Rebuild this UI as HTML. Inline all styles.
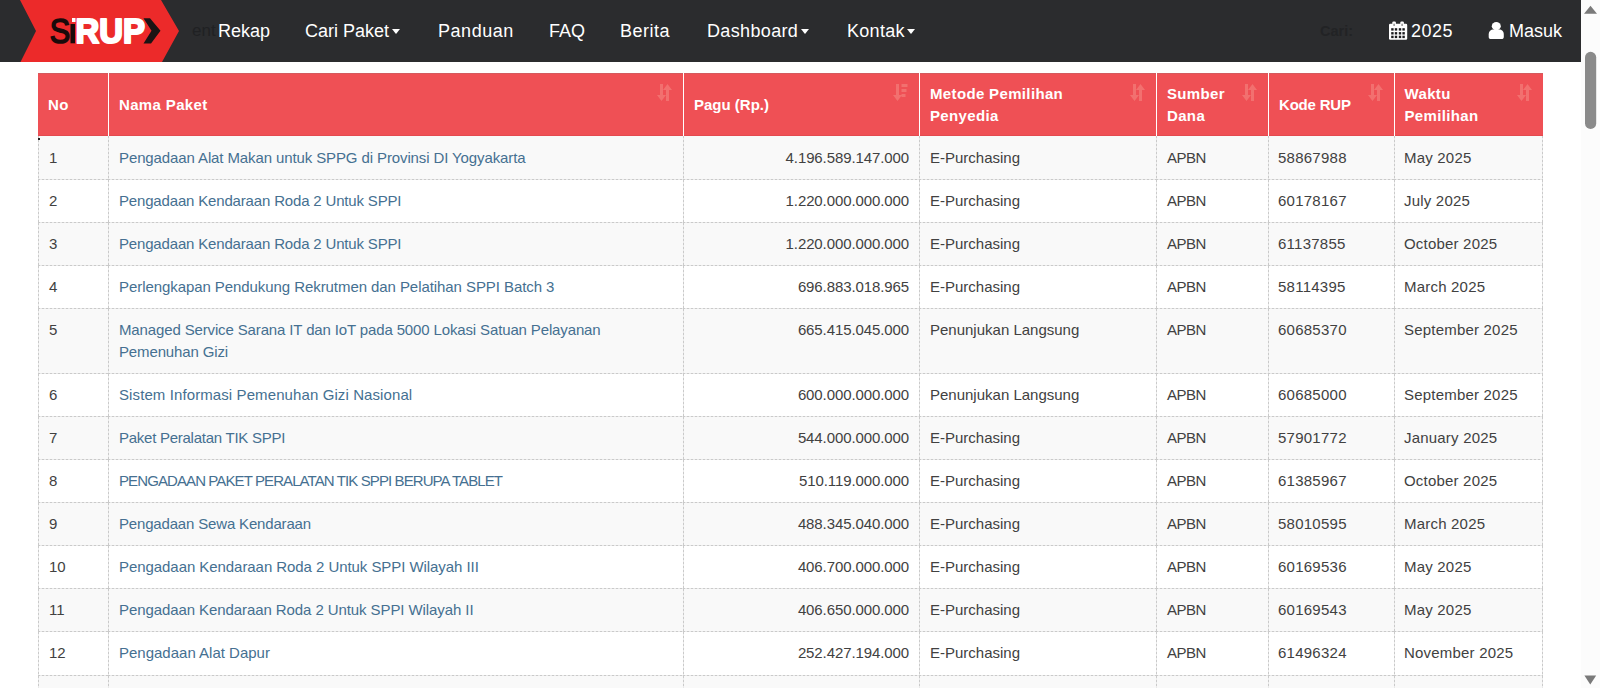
<!DOCTYPE html>
<html>
<head>
<meta charset="utf-8">
<style>
html,body{margin:0;padding:0;}
body{width:1600px;height:688px;overflow:hidden;position:relative;background:#fff;font-family:"Liberation Sans",sans-serif;}
.nav{position:absolute;left:0;top:0;width:1581px;height:62px;background:#2b2c2e;}
.nav .it{position:absolute;top:20px;height:22px;line-height:22px;font-size:18px;color:#fff;white-space:nowrap;}
.caret{display:inline-block;width:0;height:0;border-left:4.8px solid transparent;border-right:4.8px solid transparent;border-top:5.6px solid #fff;vertical-align:middle;margin-left:2.5px;position:relative;top:-1px;}
.sb{position:absolute;left:1581px;top:0;width:19px;height:688px;background:#fcfcfc;}
.tbl{position:absolute;left:38px;top:73px;border-collapse:separate;border-spacing:0;table-layout:fixed;width:1505px;}
.tbl th{background:#ef5055;color:#fff;font-weight:bold;font-size:15px;line-height:22px;text-align:left;padding:9.5px 11px 9px 10px;height:44px;letter-spacing:0.35px;position:relative;border-left:1px solid #fff;box-shadow:inset 0 -1px 0 #e44a4f,inset 0 1px 0 #d45a5e;}
.tbl th:first-child{border-left:none;}
.tbl td{font-size:15px;line-height:21.6px;color:#414141;padding:9.9px 10px 11.6px 11px;border:0;vertical-align:top;
  background-image:repeating-linear-gradient(90deg,#cacaca 0 2px,#e9e9e9 2px 4px),repeating-linear-gradient(180deg,#cacaca 0 2px,#e9e9e9 2px 4px);
  background-size:100% 1px,1px 100%;background-position:0 100%,0 0;background-repeat:no-repeat;}
.tbl td:last-child{background-image:repeating-linear-gradient(90deg,#cacaca 0 2px,#e9e9e9 2px 4px),repeating-linear-gradient(180deg,#cacaca 0 2px,#e9e9e9 2px 4px),repeating-linear-gradient(180deg,#cacaca 0 2px,#e9e9e9 2px 4px);
  background-size:100% 1px,1px 100%,1px 100%;background-position:0 100%,0 0,100% 0;}
.tbl tr:nth-child(odd) td{background-color:#f9f9f9;}
.tbl tbody tr:first-child td{padding-top:11.4px;}
.tbl td a{color:#457091;text-decoration:none;}
.tbl td.r{text-align:right;letter-spacing:-0.1px;}
.tbl td:nth-child(5){letter-spacing:-0.5px;}
.tbl td:nth-child(6){letter-spacing:0.25px;}
.tbl td:nth-child(7){letter-spacing:0.2px;}
.tbl td:nth-child(6),.tbl td:nth-child(7){padding-left:10px;}
.tbl th:nth-child(7){padding-left:9.5px;}
.tbl th:nth-child(3){letter-spacing:0;}
.tbl th:nth-child(6){letter-spacing:-0.2px;}
.si{position:absolute;right:11px;top:10.5px;width:15px;height:17px;}
</style>
</head>
<body>
<div class="nav">
  <svg style="position:absolute;left:0;top:0" width="200" height="62" viewBox="0 0 200 62">
    <polygon points="20,0 161,0 179,31 162,62 20.5,62 36,31" fill="#ec2a2a"/>
    <text x="49.8" y="43.2" font-family="Liberation Sans" font-size="35" fill="#1a0a0a" stroke="#1a0a0a" stroke-width="1.6" textLength="20.5" lengthAdjust="spacingAndGlyphs">S</text>
    <rect x="70.5" y="24" width="4.5" height="19.3" fill="#1a0a0a"/>
    <rect x="72" y="18" width="3.5" height="4" fill="#fff"/>
    <text x="75.5" y="43.4" font-family="Liberation Sans" font-weight="bold" font-size="34.8" fill="#fff" stroke="#fff" stroke-width="2.2" stroke-linejoin="round" textLength="69.5" lengthAdjust="spacingAndGlyphs">RUP</text>
    <polygon points="143.5,18.3 150,18.3 160.5,30.8 151,43.6 143.5,43.6 151.5,30.8" fill="#1a1414"/>
  </svg>
  <div class="it" style="left:192px;color:#202123;font-size:17px">ent</div>
  <div class="it" style="left:218px">Rekap</div>
  <div class="it" style="left:305px">Cari Paket<span class="caret"></span></div>
  <div class="it" style="left:438px;letter-spacing:0.55px">Panduan</div>
  <div class="it" style="left:549px">FAQ</div>
  <div class="it" style="left:620px;letter-spacing:0.5px">Berita</div>
  <div class="it" style="left:707px;letter-spacing:0.35px">Dashboard<span class="caret"></span></div>
  <div class="it" style="left:847px;letter-spacing:0.3px">Kontak<span class="caret"></span></div>
  <div class="it" style="left:1320px;color:#222325;font-weight:bold;font-size:14.5px">Cari:</div>
<svg style="position:absolute;left:1389px;top:21px" width="19" height="19" viewBox="0 0 19 19">
    <rect x="0" y="2.8" width="18.2" height="16" rx="1.3" fill="#fff"/>
    <rect x="3.3" y="0.5" width="3.6" height="5" rx="1.2" fill="#fff"/>
    <rect x="11.3" y="0.5" width="3.6" height="5" rx="1.2" fill="#fff"/>
    <rect x="4.4" y="2.4" width="1.4" height="2.6" rx="0.6" fill="#888"/>
    <rect x="12.4" y="2.4" width="1.4" height="2.6" rx="0.6" fill="#888"/>
    <g fill="#1c1c1e">
      <rect x="2.2" y="7.2" width="2.4" height="2.4"/><rect x="5.8" y="7.2" width="2.4" height="2.4"/><rect x="9.8" y="7.2" width="2.4" height="2.4"/><rect x="13.4" y="7.2" width="2.4" height="2.4"/>
      <rect x="2.2" y="11.1" width="2.4" height="2.4"/><rect x="5.8" y="11.1" width="2.4" height="2.4"/><rect x="9.8" y="11.1" width="2.4" height="2.4"/><rect x="13.4" y="11.1" width="2.4" height="2.4"/>
      <rect x="2.2" y="14.7" width="2.4" height="2.4"/><rect x="5.8" y="14.7" width="2.4" height="2.4"/><rect x="9.8" y="14.7" width="2.4" height="2.4"/><rect x="13.4" y="14.7" width="2.4" height="2.4"/>
    </g>
  </svg>
  <svg style="position:absolute;left:1488px;top:22px" width="17" height="18" viewBox="0 0 17 18">
    <ellipse cx="8.3" cy="4.2" rx="4.5" ry="4.1" fill="#fff"/>
    <path d="M0.7 12.5 C0.7 9.2 3 7.6 5.2 7.6 L11.4 7.6 C13.6 7.6 15.8 9.2 15.8 12.5 L15.8 15 C15.8 16.3 15 17.1 13.6 17.1 L2.9 17.1 C1.5 17.1 0.7 16.3 0.7 15 Z" fill="#fff"/>
  </svg>
  <div class="it" style="left:1411px;letter-spacing:0.5px">2025</div>
  <div class="it" style="left:1509px">Masuk</div>
</div>
<div class="sb"><svg width="19" height="688" viewBox="0 0 19 688" style="position:absolute;left:0;top:0">
  <polygon points="3,13.8 16,13.8 9.5,5.7" fill="#7a7a7a"/>
  <rect x="4" y="51.8" width="11.2" height="77.2" rx="5.6" fill="#8a8a8a"/>
  <polygon points="3.4,675.4 15.2,675.4 9.3,684.4" fill="#7a7a7a"/>
</svg></div>
<table class="tbl">
<colgroup><col style="width:70px"><col style="width:575px"><col style="width:236px"><col style="width:237px"><col style="width:112px"><col style="width:126px"><col style="width:149px"></colgroup>
<thead><tr>
<th>No</th>
<th>Nama Paket<svg class="si" viewBox="0 0 15 17"><path d="M3 0h3v11h3l-4.5 6l-4.5-6h3z M9 6h-3l4.5-6l4.5 6h-3v11h-3z" fill="#f2706f"/></svg></th>
<th>Pagu (Rp.)<svg class="si" viewBox="0 0 15 17"><path d="M3 0h3v11h3l-4.5 6l-4.5-6h3z M8.5 0h6v3h-6z M8.5 5h5v3h-5z M8.5 10h4v3h-4z" fill="#f2706f"/></svg></th>
<th>Metode Pemilihan<br>Penyedia<svg class="si" viewBox="0 0 15 17"><path d="M3 0h3v11h3l-4.5 6l-4.5-6h3z M9 6h-3l4.5-6l4.5 6h-3v11h-3z" fill="#f2706f"/></svg></th>
<th>Sumber<br>Dana<svg class="si" viewBox="0 0 15 17"><path d="M3 0h3v11h3l-4.5 6l-4.5-6h3z M9 6h-3l4.5-6l4.5 6h-3v11h-3z" fill="#f2706f"/></svg></th>
<th>Kode RUP<svg class="si" viewBox="0 0 15 17"><path d="M3 0h3v11h3l-4.5 6l-4.5-6h3z M9 6h-3l4.5-6l4.5 6h-3v11h-3z" fill="#f2706f"/></svg></th>
<th>Waktu<br>Pemilihan<svg class="si" viewBox="0 0 15 17"><path d="M3 0h3v11h3l-4.5 6l-4.5-6h3z M9 6h-3l4.5-6l4.5 6h-3v11h-3z" fill="#f2706f"/></svg></th>
</tr></thead>
<tbody>
<tr><td>1</td><td><a style="letter-spacing:-0.110px">Pengadaan Alat Makan untuk SPPG di Provinsi DI Yogyakarta</a></td><td class="r">4.196.589.147.000</td><td>E-Purchasing</td><td>APBN</td><td>58867988</td><td>May 2025</td></tr>
<tr><td>2</td><td><a style="letter-spacing:-0.167px">Pengadaan Kendaraan Roda 2 Untuk SPPI</a></td><td class="r">1.220.000.000.000</td><td>E-Purchasing</td><td>APBN</td><td>60178167</td><td>July 2025</td></tr>
<tr><td>3</td><td><a style="letter-spacing:-0.167px">Pengadaan Kendaraan Roda 2 Untuk SPPI</a></td><td class="r">1.220.000.000.000</td><td>E-Purchasing</td><td>APBN</td><td>61137855</td><td>October 2025</td></tr>
<tr><td>4</td><td><a style="letter-spacing:-0.070px">Perlengkapan Pendukung Rekrutmen dan Pelatihan SPPI Batch 3</a></td><td class="r">696.883.018.965</td><td>E-Purchasing</td><td>APBN</td><td>58114395</td><td>March 2025</td></tr>
<tr><td>5</td><td><a style="letter-spacing:-0.136px">Managed Service Sarana IT dan IoT pada 5000 Lokasi Satuan Pelayanan<br>Pemenuhan Gizi</a></td><td class="r">665.415.045.000</td><td>Penunjukan Langsung</td><td>APBN</td><td>60685370</td><td>September 2025</td></tr>
<tr><td>6</td><td><a style="letter-spacing:0.100px">Sistem Informasi Pemenuhan Gizi Nasional</a></td><td class="r">600.000.000.000</td><td>Penunjukan Langsung</td><td>APBN</td><td>60685000</td><td>September 2025</td></tr>
<tr><td>7</td><td><a style="letter-spacing:-0.260px">Paket Peralatan TIK SPPI</a></td><td class="r">544.000.000.000</td><td>E-Purchasing</td><td>APBN</td><td>57901772</td><td>January 2025</td></tr>
<tr><td>8</td><td><a style="letter-spacing:-0.900px">PENGADAAN PAKET PERALATAN TIK SPPI BERUPA TABLET</a></td><td class="r">510.119.000.000</td><td>E-Purchasing</td><td>APBN</td><td>61385967</td><td>October 2025</td></tr>
<tr><td>9</td><td><a style="letter-spacing:-0.170px">Pengadaan Sewa Kendaraan</a></td><td class="r">488.345.040.000</td><td>E-Purchasing</td><td>APBN</td><td>58010595</td><td>March 2025</td></tr>
<tr><td>10</td><td><a style="letter-spacing:-0.060px">Pengadaan Kendaraan Roda 2 Untuk SPPI Wilayah III</a></td><td class="r">406.700.000.000</td><td>E-Purchasing</td><td>APBN</td><td>60169536</td><td>May 2025</td></tr>
<tr><td>11</td><td><a style="letter-spacing:-0.085px">Pengadaan Kendaraan Roda 2 Untuk SPPI Wilayah II</a></td><td class="r">406.650.000.000</td><td>E-Purchasing</td><td>APBN</td><td>60169543</td><td>May 2025</td></tr>
<tr><td>12</td><td><a>Pengadaan Alat Dapur</a></td><td class="r">252.427.194.000</td><td>E-Purchasing</td><td>APBN</td><td>61496324</td><td>November 2025</td></tr>
<tr><td>13</td><td><a>Pengadaan</a></td><td class="r">200.000.000.000</td><td>E-Purchasing</td><td>APBN</td><td>61496325</td><td>November 2025</td></tr>
</tbody>
</table>
<div style="position:absolute;left:38px;top:138px;width:2px;height:2px;background:#222;"></div>
</body>
</html>
